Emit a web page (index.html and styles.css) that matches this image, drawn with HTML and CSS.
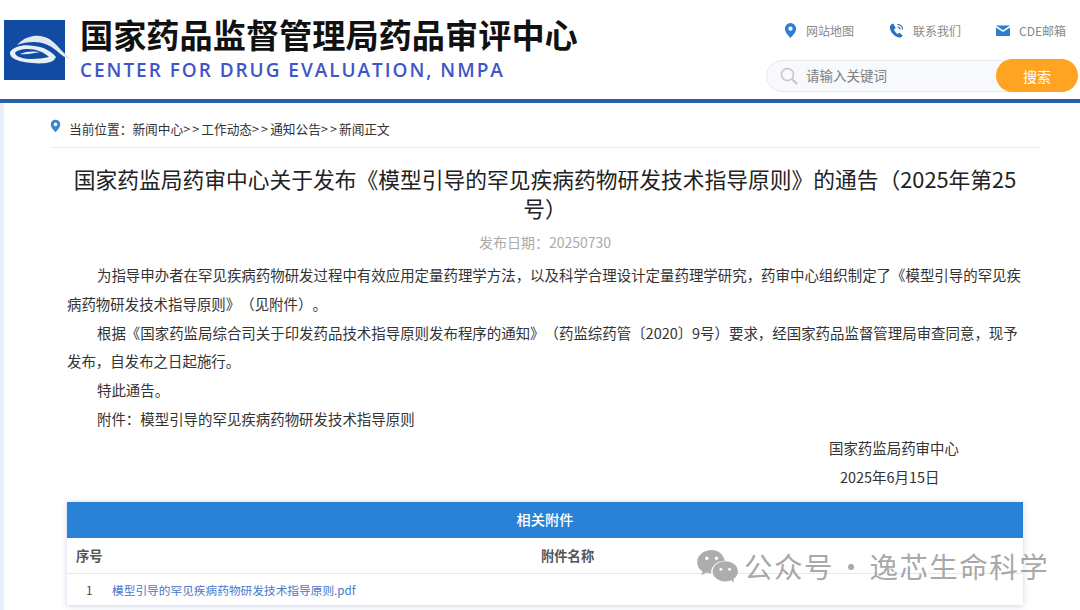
FILE: index.html
```html
<!DOCTYPE html>
<html lang="zh">
<head>
<meta charset="utf-8">
<title>国家药品监督管理局药品审评中心</title>
<link rel="stylesheet" href="styles.css">
</head>
<body>
<header class="header">
  <div class="brand">
    <svg class="logo" viewBox="0 0 61 60" width="61" height="60">
      <rect width="61" height="60" fill="#114ba3"/>
      <path d="M13 25C20 17 30 15 36 16C46 17 52 24 57 30C60 33 63 36 68 40C62 38 58 36 53 31C46 25 38 22 30 22C24 22 18 23 13 25Z" fill="#dfe8f3"/>
      <path fill-rule="evenodd" d="M6 32C10 26 20 24 30 26C40 27 47 31 52 37L50 40C47 43 38 44 28 43C16 42 5 39 6 32ZM11 33C12 37 20 39 28 39C34 39 40 38 45 37C40 32 32 29 24 29C17 29 12 31 11 33Z" fill="#e8eef5"/>
      <path d="M16 34C22 31 30 31 36 32C30 33 22 35 16 34Z" fill="#e8eef5"/>
    </svg>
    <div class="brand-text">
      <div class="brand-cn">国家药品监督管理局药品审评中心</div>
      <div class="brand-en">CENTER FOR DRUG EVALUATION, NMPA</div>
    </div>
  </div>
  <div class="tools">
    <nav class="links">
      <a class="link">
        <svg class="ico" viewBox="0 0 14 16" width="13" height="15"><path fill-rule="evenodd" d="M7 0a6 6 0 0 1 6 6c0 4-4 7.500-6 10C5 13.500 1 10 1 6a6 6 0 0 1 6-6Zm0 3.700a2.300 2.300 0 1 0 0 4.600 2.300 2.300 0 0 0 0-4.600Z" fill="#2d7dd2"/></svg>
        网站地图
      </a>
      <a class="link">
        <svg class="ico" viewBox="0 0 16 16" width="15" height="15"><path d="M4.500 0.500C2.500 1 1 2.500 1 4.500c0 5 4.500 10 10 11 1.500.2 2.800-.8 3.500-2.300l-3.300-2.700-2 1.300C7.500 10.800 6 9 5.300 7l1.900-1.800L4.500.5Z" fill="#2d6fc0"/><path d="M9 1.500a5.500 5.500 0 0 1 5.500 5.500M9 4.200A2.800 2.800 0 0 1 11.800 7" fill="none" stroke="#2d6fc0" stroke-width="1.200"/></svg>
        联系我们
      </a>
      <a class="link">
        <svg class="ico" viewBox="0 0 14 11" width="14" height="11"><path d="M0 0.500h14L7 5.200 0 .5Zm0 2L7 7l7-4.500V11H0V2.500Z" fill="#2d7dd2"/></svg>
        CDE邮箱
      </a>
    </nav>
    <div class="search">
      <svg class="search-ico" viewBox="0 0 18 18" width="18" height="18"><circle cx="7.500" cy="7.500" r="6" fill="none" stroke="#c4c4c4" stroke-width="1.500"/><path d="M12 12l5 5" stroke="#c4c4c4" stroke-width="2"/></svg>
      <span class="placeholder">请输入关键词</span>
      <span class="search-btn">搜索</span>
    </div>
  </div>
</header>
<main class="page">
  <div class="crumbs">
    <svg class="crumb-ico" viewBox="0 0 14 16" width="11" height="16"><path fill-rule="evenodd" d="M7 0a6 6 0 0 1 6 6c0 4-4 7.500-6 10C5 13.500 1 10 1 6a6 6 0 0 1 6-6Zm0 3.700a2.300 2.300 0 1 0 0 4.600 2.300 2.300 0 0 0 0-4.600Z" fill="#3f84cf"/></svg>
    <span>当前位置：新闻中心<span class="sep">&gt;&gt;</span>工作动态<span class="sep">&gt;&gt;</span>通知公告<span class="sep">&gt;&gt;</span>新闻正文</span>
  </div>
  <article class="article">
    <h1 class="title">国家药监局药审中心关于发布《模型引导的罕见疾病药物研发技术指导原则》的通告（2025年第25号）</h1>
    <div class="date">发布日期：20250730</div>
    <p class="para">为指导申办者在罕见疾病药物研发过程中有效应用定量药理学方法，以及科学合理设计定量药理学研究，药审中心组织制定了《模型引导的罕见疾病药物研发技术指导原则》（见附件）。</p>
    <p class="para">根据《国家药监局综合司关于印发药品技术指导原则发布程序的通知》（药监综药管〔2020〕9号）要求，经国家药品监督管理局审查同意，现予发布，自发布之日起施行。</p>
    <p class="para">特此通告。</p>
    <p class="para">附件：模型引导的罕见疾病药物研发技术指导原则</p>
    <p class="sign sign-org">国家药监局药审中心</p>
    <p class="sign sign-date">2025年6月15日</p>
    <section class="attach">
      <div class="attach-head">相关附件</div>
      <div class="attach-cols"><span class="col-no">序号</span><span class="col-name">附件名称</span></div>
      <div class="attach-row"><span class="row-no">1</span><a class="row-link">模型引导的罕见疾病药物研发技术指导原则.pdf</a></div>
    </section>
  </article>
</main>
<div class="watermark">
  <svg class="wm-ico" viewBox="0 0 42 34" width="41" height="33"><path d="M15 0C7 0 0 5.500 0 12.500c0 4 2.300 7.300 5.500 9.500L4.500 26l5-2.700c1.700.5 3 .8 5 .8-.5-6 4-12.500 14-13C27 4.500 22 0 15 0Z" fill="#adadad"/><ellipse cx="29" cy="22" rx="13" ry="10.500" fill="#adadad"/><path d="M34 30l4 4-1-6Z" fill="#adadad"/><circle cx="10" cy="8.500" r="1.700" fill="#fff"/><circle cx="20" cy="8.500" r="1.700" fill="#fff"/><circle cx="24.500" cy="20" r="1.500" fill="#fff"/><circle cx="33.500" cy="20" r="1.500" fill="#fff"/></svg>
  <span class="wm-text">公众号 · 逸芯生命科学</span>
</div>
</body>
</html>
```

FILE: styles.css
```css
* { box-sizing: border-box; }
html, body { margin: 0; padding: 0; }
body {
  width: 1080px;
  height: 610px;
  overflow: hidden;
  position: relative;
  background: #fff;
  color: #333;
  font-family: "Noto Sans CJK SC", "Noto Sans", sans-serif;
  text-spacing-trim: space-all;
}
.header {
  height: 103px;
  border-bottom: 4px solid #2b5fad;
  display: flex;
  justify-content: space-between;
  padding: 13px 2px 0 4px;
}
.brand { display: flex; gap: 15px; padding-top: 7px; }
.logo { display: block; overflow: visible; }
.brand-text { margin-top: -8px; }
.brand-cn {
  font-size: 33.200px;
  line-height: 44px;
  font-weight: 700;
  color: #111;
  white-space: nowrap;
}
.brand-en {
  font-family: "Open Sans", sans-serif;
  font-size: 19px;
  line-height: 24px;
  font-weight: 600;
  letter-spacing: 1.960px;
  margin-top: 2px;
  color: #3f57c6;
  white-space: nowrap;
}
.tools { width: 312px; display: flex; flex-direction: column; }
.links { display: flex; height: 34px; padding: 0 0 0 18px; }
.link {
  display: flex;
  align-items: center;
  gap: 9px;
  font-size: 12px;
  color: #888;
  white-space: nowrap;
  height: 34px;
}
.link:nth-child(1) { width: 105px; }
.link:nth-child(2) { width: 107px; }
.ico { display: block; }
.search {
  margin-top: 13px;
  height: 32px;
  border: 1px solid #e8eaee;
  border-radius: 16px;
  background: #f8f9fc;
  display: flex;
  align-items: center;
  position: relative;
  padding-left: 13px;
}
.search-ico { display: block; }
.placeholder { font-size: 13.500px; line-height: 28px; color: #808080; margin: -2px 0 0 8px; }
.search-btn {
  position: absolute;
  right: -1px;
  top: -2px;
  width: 82px;
  height: 33px;
  border-radius: 17px;
  background: #ffa322;
  color: #fff;
  font-size: 14px;
  display: flex;
  align-items: center;
  justify-content: center;
}
.page {
  height: 507px;
  border-left: 4px solid #e8effa;
  padding: 0 40px 0 46px;
}
.crumbs {
  height: 45px;
  border-bottom: 1px solid #ececec;
  display: flex;
  align-items: center;
  gap: 8px;
  font-size: 12.700px;
  color: #333;
  padding-top: 6px;
  white-space: nowrap;
}
.sep { letter-spacing: 2px; }
.crumb-ico { display: block; margin-top: -5px; }
.article { padding: 16px 17px 0; }
.title {
  margin: 0;
  font-size: 21.750px;
  line-height: 29px;
  font-weight: 400;
  color: #222;
  text-align: center;
}
.date {
  margin-top: 8px;
  height: 24px;
  line-height: 24px;
  text-align: center;
  font-size: 14px;
  color: #aaa;
}
.para {
  margin: 0;
  font-size: 14.440px;
  line-height: 28.800px;
  text-indent: 30px;
  color: #333;
}
.date + .para { margin-top: 7px; }
.sign { margin: 0; font-size: 14.440px; line-height: 28.800px; color: #333; white-space: nowrap; }
.sign-org { padding-left: 762px; }
.sign-date { padding-left: 773px; }
.attach {
  margin-top: 11px;
  box-shadow: 0 1px 6px rgba(90, 110, 170, .3);
  background: #fff;
}
.attach-head {
  height: 36px;
  background: #2a82d7;
  color: #fff;
  font-size: 14.200px;
  font-weight: 500;
  text-align: center;
  line-height: 34px;
}
.attach-cols {
  height: 36px;
  border-bottom: 1px solid #e8e8e8;
  font-size: 13.300px;
  font-weight: 700;
  color: #555;
  display: flex;
  align-items: center;
  padding-left: 9px;
}
.col-no { width: 465px; }
.attach-row {
  height: 31px;
  display: flex;
  align-items: center;
  font-size: 11.700px;
  padding-left: 19px;
}
.row-no { width: 26px; color: #444; }
.row-link { color: #4a77c9; }
.watermark {
  position: absolute;
  left: 697px;
  top: 549px;
  display: flex;
  align-items: center;
  gap: 6px;
  font-size: 28.500px;
  letter-spacing: 1.450px;
  word-spacing: -5px;
  line-height: 34px;
  color: rgba(130, 130, 130, .7);
  white-space: nowrap;
}
.wm-ico { display: block; }
```
